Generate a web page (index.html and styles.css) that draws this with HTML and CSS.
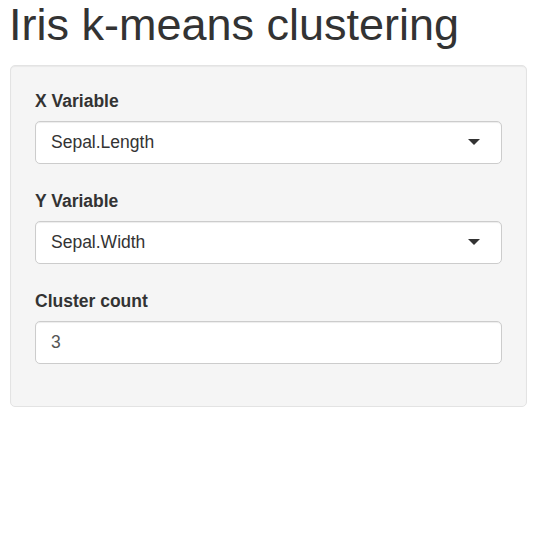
FILE: index.html
```html
<!DOCTYPE html>
<html>
<head>
<meta charset="utf-8">
<link rel="stylesheet" href="styles.css">
</head>
<body>
<div class="page">
  <h2 class="title">Iris k-means clustering</h2>
  <div class="well">
    <div class="group group-select">
      <label class="label">X Variable</label>
      <div class="select">
        <span class="value">Sepal.Length</span>
        <span class="caret"></span>
      </div>
    </div>
    <div class="group group-select">
      <label class="label">Y Variable</label>
      <div class="select">
        <span class="value">Sepal.Width</span>
        <span class="caret"></span>
      </div>
    </div>
    <div class="group">
      <label class="label">Cluster count</label>
      <div class="input"><span class="value">3</span></div>
    </div>
  </div>
</div>
</body>
</html>
```
FILE: styles.css
```css
* { box-sizing: border-box; }
html, body { margin: 0; padding: 0; background: #fff; }
body {
  font-family: "Liberation Sans", Arial, sans-serif;
  font-size: 17.5px;
  line-height: 25px;
  color: #333;
}
.page { padding: 0 14px 0 10px; }
.title {
  margin: 0 0 15.5px -1px;
  font-size: 45px;
  font-weight: 500;
  line-height: 49.5px;
  color: #333;
}
.well {
  width: 517px;
  background: #f5f5f5;
  border: 1px solid #e3e3e3;
  border-radius: 5px;
  box-shadow: inset 0 1px 1px rgba(0,0,0,.05);
  padding: 23px 24px 23.5px;
}
.group { margin-bottom: 18.75px; }
.group-select { margin-bottom: 25.5px; }
.label {
  display: block;
  font-weight: 700;
  margin-bottom: 7px;
}
.select, .input {
  position: relative;
  display: flex;
  align-items: center;
  height: 42.5px;
  padding: 0 15px;
  background: #fff;
  border: 1px solid #ccc;
  border-radius: 5px;
  box-shadow: inset 0 1px 1px rgba(0,0,0,.075);
  color: #333;
}
.input { color: #555; }
.caret {
  position: absolute;
  right: 21px;
  top: 50%;
  margin-top: -3px;
  width: 0;
  height: 0;
  border-style: solid;
  border-width: 6px 6px 0 6px;
  border-color: #333 transparent transparent transparent;
}
```
